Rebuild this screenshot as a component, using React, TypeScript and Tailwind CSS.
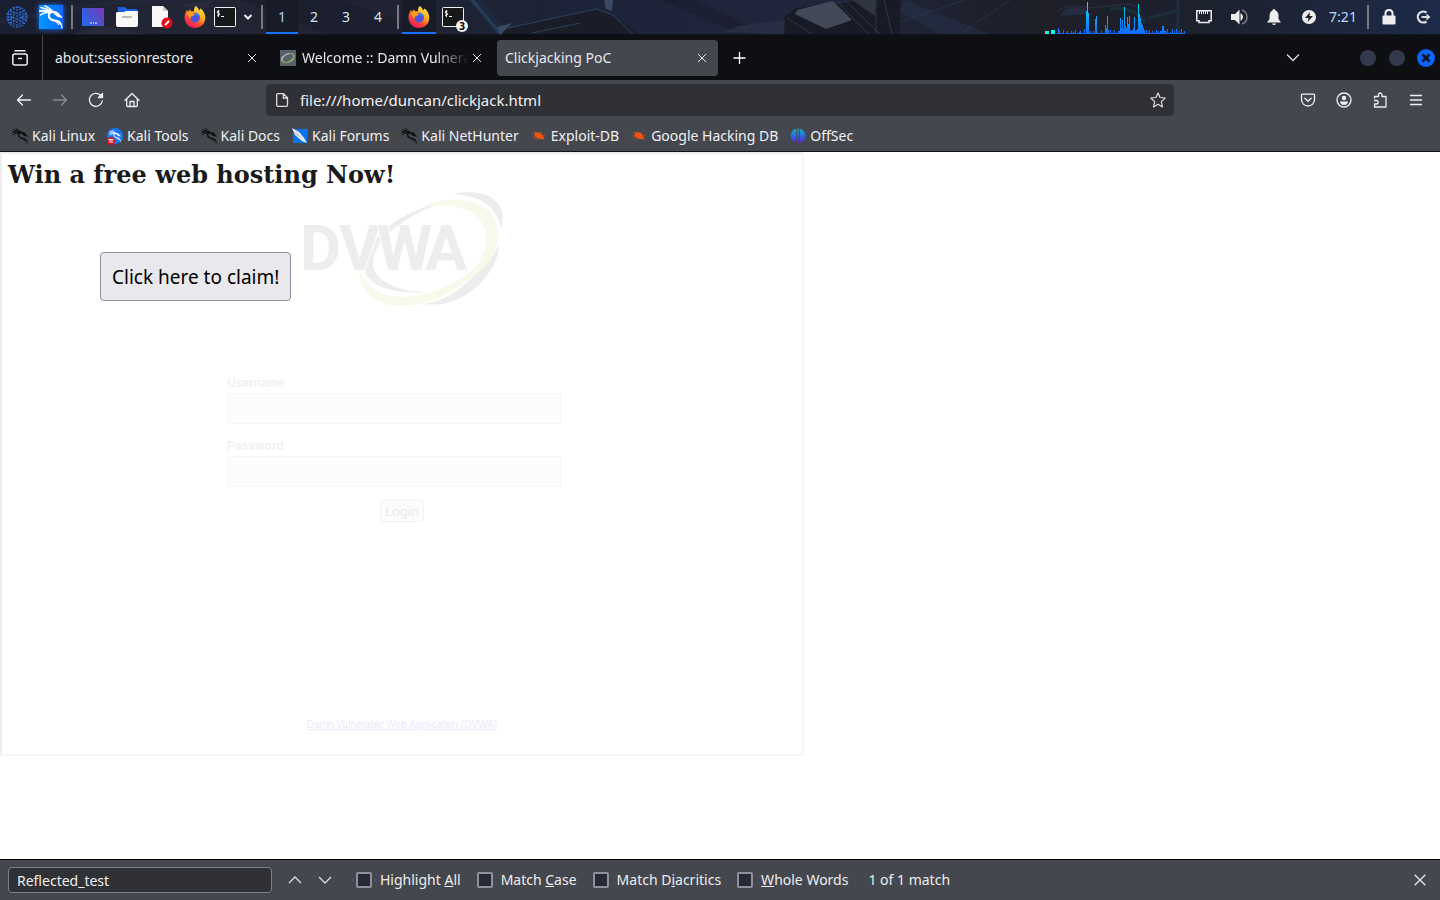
import { useState, type ReactNode } from "react";

const SPECTRUM = [
  1, 6, 4, 1, 1, 1, 4, 0, 1, 1, 3, 1, 1, 1, 3, 1, 2, 1, 4, 0, 1, 1, 2, 3, 1, 1, 1, 5, 1, 23, 32, 21, 2, 3, 1, 1, 3, 1,
  15, 18, 2, 1, 1, 1, 3, 1, 1, 1, 9, 6, 18, 4, 1, 4, 1, 1, 1, 4, 1, 1, 1, 3, 3, 16, 6, 14, 5, 27, 8, 6, 17, 10, 18, 4,
  3, 4, 6, 17, 3, 4, 5, 30, 20, 16, 11, 9, 6, 4, 1, 4, 1, 1, 4, 1, 1, 3, 1, 1, 1, 4, 1, 3, 1, 3, 3, 8, 8, 4, 3, 1, 5, 1,
  1, 2, 1, 5, 1, 3, 1, 5, 1, 1, 3, 1, 5, 1, 1, 3, 3,
];

function Wallpaper() {
  return (
    <svg className="absolute inset-0 size-full" viewBox="0 0 1440 35" preserveAspectRatio="none" aria-hidden="true">
      <defs>
        <linearGradient id="wall">
          <stop offset="0" stopColor="#191f30" />
          <stop offset=".12" stopColor="#222534" />
          <stop offset=".28" stopColor="#202432" />
          <stop offset=".4" stopColor="#1c2238" />
          <stop offset=".56" stopColor="#20273c" />
          <stop offset=".72" stopColor="#1d1e28" />
          <stop offset=".86" stopColor="#1d2230" />
          <stop offset="1" stopColor="#1c2a49" />
        </linearGradient>
      </defs>
      <path fill="url(#wall)" d="M0 0H1440V35H0Z" />
      <path fill="#253046" d="M0 25L95 6L190 0H120L0 18Z" opacity=".4" />
      <path fill="#2b303f" d="M70 35L100 25L150 35ZM180 5L212 0L205 10Z" opacity=".6" />
      <path fill="#151a25" d="M240 0H340L440 35H330Z" opacity=".4" />
      <path fill="#1b2a42" d="M468 0H480L510 35H498Z" />
      <path fill="#31516f" d="M470 0H474L503 35H500Z" opacity=".5" />
      <path fill="#1a1d27" d="M505 30L595 9L612 14L640 35H502Z" />
      <path stroke="#2e5273" fill="none" opacity=".7" d="M532 33L580 23M508 28L596 9L613 15L633 34" />
      <path fill="#3a4863" d="M604 0H613L612 11L606 9ZM497 27L512 23L500 35Z" />
      <path fill="#191d2d" d="M660 0H695L755 28L740 34Z" opacity=".7" />
      <path fill="#272d42" d="M725 32Q738 22 800 20V35Z" />
      <path fill="#181b25" d="M785 16L796 8L868 0H900V35H784Z" />
      <path fill="#424a59" d="M797 10L833 1L852 20L826 29L795 14Z" />
      <path stroke="#404a62" fill="none" opacity=".6" d="M837 1L868 34M845 0L880 34M787 18L812 34M876 0V34M884 0L892 34" />
      <path fill="#303542" d="M852 0H876L875 16Z" />
      <path fill="#273855" d="M905 0L990 34H940L900 12Z" opacity=".4" />
      <path stroke="#32445d" fill="none" opacity=".5" d="M900 22L965 0M960 34L1010 0M1057 12Q1065 2 1090 8L1130 4Q1147 10 1144 24" />
      <path stroke="#1d3a49" strokeWidth="3" fill="none" opacity=".6" d="M1148 18L1176 11M1178 0V34M1110 9Q1135 6 1144 22" />
      <path fill="#242b43" d="M1060 16Q1065 4 1085 8L1090 14Z" />
      <path fill="#0b0d12" d="M0 34H1440V35H0Z" opacity=".6" />
    </svg>
  );
}

function Dragon({ className }: { className: string }) {
  return (
    <svg className={className} viewBox="0 0 24 24" fill="none" stroke="currentColor" strokeLinecap="round" aria-hidden="true">
      <path strokeWidth="1.400" d="M2 2.500Q8 3.500 12.500 6.500M1.500 10Q6 6.500 12 7.500M6 .8Q10 2.500 13 5.500" />
      <path strokeWidth="2" d="M1 6Q9 5.200 14.500 7Q18 7.300 19.500 9.500" />
      <path fill="currentColor" strokeWidth=".8" d="M14 6.500Q19 6.500 20.500 9.500L23 12.500L18.500 11.500L15.500 9Z" />
      <path strokeWidth="2" d="M12.500 7Q9 8.500 10 12Q11.500 15.300 16 15.500Q20.500 16 21.500 19" />
      <path strokeWidth="1.200" d="M21 17.500Q23 20 23 23M15 15.500Q19 18 19.500 19.500" />
    </svg>
  );
}

function Separator() {
  return (
    <span className="flex w-2 shrink-0 justify-center">
      <span className="h-6 w-0.5 bg-[#777980]" />
    </span>
  );
}

function LogoFirefox() {
  return (
    <svg className="size-6" viewBox="0 0 24 24" aria-hidden="true">
      <defs>
        <linearGradient id="fxBody" x1=".8" y1=".05" x2=".25" y2=".95">
          <stop offset="0" stopColor="#fff04a" />
          <stop offset=".4" stopColor="#ffa620" />
          <stop offset=".68" stopColor="#ff4b32" />
          <stop offset="1" stopColor="#ec1561" />
        </linearGradient>
      </defs>
      <path fill="url(#fxBody)" d="M12.8 1C14.5 2.3 15.6 3.8 16.1 5.5L17.5 3.4C19.8 5.2 22.5 8.3 22.3 13.3C22 19.2 17.6 23 12.1 23C6.2 23 1.5 18.7 1.5 12.6C1.5 9.6 2.4 7 4.2 4.7L5 7L7 4.2L7.8 6.3C9.3 6 10 6.2 11 6.5C10.8 4.1 11.4 2.4 12.8 1Z" />
      <circle cx="12" cy="12.6" r="4.9" fill="#4d55dd" />
      <path fill="#ff9a25" d="M4.8 7.6C7.5 6.8 10.3 7.4 12 9.2C11.5 10.5 9.7 10.8 8.2 11.2C7.6 12 7.9 12.8 8.5 13.5C5.7 13.4 4.2 10.7 4.8 7.6Z" />
      <path fill="#2b83ef" d="M12 8.1C14.3 7.8 16.4 9.3 16.9 11.3L13 11Z" />
    </svg>
  );
}

function LogoTerminal() {
  return (
    <svg className="h-5 w-6" viewBox="0 0 24 20" aria-hidden="true">
      <rect x="1.5" y=".5" width="21" height="19" rx="1" fill="#171819" stroke="#f0f0f0" />
      <path d="M6.5 4.3Q4.2 3.6 4.2 5.2Q4.3 6.2 5.5 6.2T6.7 7.5Q6.3 8.9 4.2 8.2M5.4 3V10" stroke="#fff" fill="none" />
      <path d="M8 9.5H11" stroke="#fff" />
    </svg>
  );
}

function MenuOrb() {
  return (
    <svg className="size-6" viewBox="0 0 24 24" fill="none" stroke="#2c6cd8" strokeWidth="1.200" aria-hidden="true">
      <circle cx="12" cy="12" r="10" strokeDasharray="2 1" />
      <path strokeDasharray="2 1" d="M12 1V23M9 3V21M15 3V21M6 5V19M18 5V19M3.500 8V16M20.500 8V16M3 9L9 13M21 9L15 13M3 15L9 12M21 15L15 12M5 6L11 9M19 6L13 9M5 18L11 15M19 18L13 15" />
    </svg>
  );
}

function PanelButton({ label, children, active }: { label: string; children: ReactNode; active?: boolean }) {
  return (
    <button
      aria-label={label}
      className={
        active
          ? "flex h-full w-[34px] shrink-0 items-center justify-center border-y-2 border-t-transparent border-b-[#1673ff] bg-[#181c28]"
          : "flex h-full w-[34px] shrink-0 items-center justify-center"
      }
    >
      {children}
    </button>
  );
}

function DesktopPanel() {
  const [workspace, setWorkspace] = useState(1);
  return (
    <header className="relative h-[35px] bg-[#1d2232] text-[#eee]">
      <Wallpaper />
      <div className="relative flex h-[34px] items-center">
        <PanelButton label="Applications"><MenuOrb /></PanelButton>
        <PanelButton label="Kali menu">
          <span className="flex size-6 items-center justify-center bg-linear-to-r from-[#0899ff] to-[#1266ff] shadow-[0_0_5px_#1473ff]">
            <Dragon className="size-6 text-white" />
          </span>
        </PanelButton>
        <Separator />
        <PanelButton label="Show desktop">
          <svg className="size-6" viewBox="0 0 24 24" aria-hidden="true">
            <defs><linearGradient id="desk" x2="1" y1=".8" y2=".2"><stop stopColor="#2468ed" /><stop offset="1" stopColor="#743cbb" /></linearGradient></defs>
            <path fill="url(#desk)" d="M1 3H23V21H1Z" />
            <path stroke="#fff" d="M9 18H11M12 18H13M14 18H16" />
          </svg>
        </PanelButton>
        <PanelButton label="Files">
          <svg className="size-6" viewBox="0 0 24 24" aria-hidden="true">
            <path fill="#1e5fe0" d="M3 2H10L12 4H22V10H3Z" />
            <path fill="#f7f7f7" d="M2 7H9L11 6H23V20Q23 22 21 22H3Q1 22 1 20V8Z" />
            <rect x="7" y="11" width="10" height="2" rx="1" fill="#b8b8b8" />
          </svg>
        </PanelButton>
        <PanelButton label="Text editor">
          <svg className="size-6" viewBox="0 0 24 24" aria-hidden="true">
            <path fill="#f7f7f7" d="M3 1H14L19 6V22H3Z" />
            <path fill="#c8c8c8" d="M14 1V6H19Z" />
            <circle cx="18" cy="18" r="5.500" fill="#e00b14" />
            <path stroke="#fff" strokeWidth="2" d="M16 20L20 16" />
          </svg>
        </PanelButton>
        <PanelButton label="Firefox"><LogoFirefox /></PanelButton>
        <button aria-label="Terminal" className="flex w-[26px] shrink-0 justify-center"><LogoTerminal /></button>
        <button aria-label="More terminals" className="flex w-5 shrink-0 justify-center">
          <svg className="size-3" viewBox="0 0 12 12" fill="none" stroke="#eee" strokeWidth="2" aria-hidden="true"><path d="M2.500 4L6 7.500L9.500 4" /></svg>
        </button>
        <Separator />
        {[1, 2, 3, 4].map((n) => (
          <button
            key={n}
            onClick={() => setWorkspace(n)}
            className={
              n === workspace
                ? "h-full w-8 shrink-0 border-y-2 border-t-transparent border-b-[#1673ff] bg-[#181c28] text-[#a9d2ff]"
                : "h-full w-8 shrink-0 border-y-2 border-transparent text-[#d4e4f4]"
            }
          >
            {n}
          </button>
        ))}
        <Separator />
        <PanelButton label="Firefox window" active><LogoFirefox /></PanelButton>
        <button aria-label="Terminal windows" className="relative flex h-full w-[34px] shrink-0 items-center justify-center">
          <LogoTerminal />
          <span className="absolute right-0.5 bottom-0.5 flex size-3 items-center justify-center rounded-full bg-[#f3f3f3] text-[10px] font-bold text-black">3</span>
        </button>
        <svg className="mr-px ml-auto h-[34px] w-[140px] shrink-0" viewBox="0 0 140 34" aria-hidden="true">
          <defs>
            <linearGradient id="eq" gradientUnits="userSpaceOnUse" x1="0" x2="0" y1="0" y2="34"><stop stopColor="#05f5e8" /><stop offset=".5" stopColor="#13a6f4" /><stop offset="1" stopColor="#1068ff" /></linearGradient>
          </defs>
          <path fill="#09f8df" d="M0 31H4V34H0ZM6 30H10V34H6Z" />
          <g fill="url(#eq)">
            {SPECTRUM.map((h, i) => <rect key={i} x={12 + i} y={34 - h} width="1" height={h} />)}
          </g>
        </svg>
        <div className="flex shrink-0 items-center">
          <button aria-label="Network" className="flex w-[35px] justify-center">
            <svg className="size-[18px]" viewBox="0 0 18 18" aria-hidden="true"><path fill="none" stroke="#eee" strokeWidth="1.500" d="M1.800 2.800H16.200V12.800H14V14.500H4V12.800H1.800Z" /><path stroke="#eee" d="M4.500 3V6M6.500 3V6M8.500 3V6M10.500 3V6M12.500 3V6" /></svg>
          </button>
          <button aria-label="Volume" className="flex w-[35px] justify-center">
            <svg className="size-[18px]" viewBox="0 0 18 18" aria-hidden="true"><path fill="#eee" d="M1 6H5L9.500 1.500V16.500L5 12H1Z" /><path fill="#eee" d="M10.500 5Q13 6.500 13 9T10.500 13Z" /><path fill="none" stroke="#777b83" strokeWidth="1.500" d="M12 2Q17 4 17 9T12 16" /></svg>
          </button>
          <button aria-label="Notifications" className="flex w-[35px] justify-center">
            <svg className="size-[18px]" viewBox="0 0 18 18" fill="#eee" aria-hidden="true"><path d="M9 1Q10.500 1 10.500 2.600Q13.500 4 13.500 7.500V11L16 14.500H2L4.500 11V7.500Q4.500 4 7.500 2.600Q7.500 1 9 1ZM7 15.500H11Q10.500 17 9 17T7 15.500Z" /></svg>
          </button>
          <button aria-label="Power" className="flex w-[35px] justify-center">
            <svg className="size-[18px]" viewBox="0 0 18 18" aria-hidden="true"><circle cx="9" cy="9" r="7" fill="#eee" /><path fill="#1c202c" d="M10 4L5 10H8.500L7.500 14L13 8H9.500Z" /></svg>
          </button>
          <time className="w-[38px] pr-1 text-center text-[#b9dcff]">7:21</time>
          <Separator />
          <button aria-label="Lock screen" className="flex w-[34px] justify-center">
            <svg className="size-[18px]" viewBox="0 0 18 18" aria-hidden="true"><path fill="none" stroke="#eee" strokeWidth="2" d="M5.500 8V5.500Q5.500 2 9 2T12.500 5.500V8" /><rect x="2.500" y="7.500" width="13" height="9" rx="1" fill="#eee" /></svg>
          </button>
          <button aria-label="Log out" className="flex w-[34px] justify-center">
            <svg className="size-[18px]" viewBox="0 0 18 18" fill="none" stroke="#ddd" strokeWidth="2.200" aria-hidden="true"><path d="M12.500 4.500A5.500 5.500 0 1 0 12.500 13.500M7.500 9H15" /><path fill="#ddd" stroke="none" d="M12.500 5.500L16.500 9L12.500 12.500Z" /></svg>
          </button>
        </div>
      </div>
    </header>
  );
}

function Cross({ className }: { className: string }) {
  return (
    <svg className={className} viewBox="0 0 12 12" fill="none" stroke="#e6e6e6" strokeWidth="1" aria-hidden="true">
      <path d="M2 2L10 10M10 2L2 10" />
    </svg>
  );
}

function Tab({ title, active, fade, icon }: { title: string; active?: boolean; fade?: boolean; icon?: ReactNode }) {
  return (
    <div
      className={
        active
          ? "flex h-9 w-[221px] items-center gap-[6px] rounded-sm bg-[#44474e] px-2"
          : "flex h-9 w-[221px] items-center gap-[6px] rounded-sm px-2"
      }
    >
      {icon}
      <button
        role="tab"
        aria-selected={!!active}
        className={
          fade
            ? "min-w-0 flex-1 overflow-hidden text-left whitespace-nowrap mask-r-from-80% mask-r-to-100%"
            : "min-w-0 flex-1 overflow-hidden text-left whitespace-nowrap"
        }
      >
        {title}
      </button>
      <button aria-label={"Close " + title} className={fade ? "-ml-1 shrink-0 pr-0.5" : "shrink-0 pr-0.5"}>
        <Cross className="size-3" />
      </button>
    </div>
  );
}

function TabStrip() {
  return (
    <div className="flex h-[45px] items-center bg-[#0e0f13]">
      <button aria-label="Firefox View" className="flex h-full w-[43px] shrink-0 items-center justify-center border-r border-[#44464c] pr-0.5">
        <svg className="size-[18px]" viewBox="0 0 18 18" fill="none" stroke="#eee" strokeWidth="1.500" strokeLinecap="round" aria-hidden="true">
          <path d="M4 1.800H14M7.500 9.500H10.500" />
          <rect x="1.800" y="5" width="14.400" height="11" rx="2" />
        </svg>
      </button>
      <div role="tablist" className="ml-1 flex gap-1">
        <Tab title="about:sessionrestore" />
        <Tab
          title="Welcome :: Damn Vulnera"
          fade
          icon={
            <svg className="size-4 shrink-0" viewBox="0 0 16 16" aria-hidden="true">
              <path fill="#58616b" d="M0 0H16V16H0Z" />
              <ellipse cx="8" cy="8" rx="6.500" ry="4" transform="rotate(-25 8 8)" fill="none" stroke="#d8dddd" strokeWidth="1" />
              <path fill="none" stroke="#7fa03c" strokeWidth="1.200" d="M9 3.500Q14 3 14 6.500Q12 10.500 7 12.500Q3 13 2 11" />
            </svg>
          }
        />
        <Tab title="Clickjacking PoC" active />
      </div>
      <button aria-label="New tab" className="ml-[14px]">
        <svg className="size-4" viewBox="0 0 16 16" stroke="#fff" strokeWidth="1.300" aria-hidden="true"><path d="M7.500 2V14M1.500 8H13.500" /></svg>
      </button>
      <div className="ml-auto flex items-center">
        <button aria-label="List all tabs" className="mr-[59px]">
          <svg className="size-4" viewBox="0 0 16 16" fill="none" stroke="#ddd" strokeWidth="1.300" aria-hidden="true"><path d="M2 4.500L8 10.500L14 4.500" /></svg>
        </button>
        <div className="flex items-center gap-3 pr-[5px]">
          <button aria-label="Minimize" className="size-4 rounded-full bg-[#343a4d]" />
          <button aria-label="Maximize" className="ml-px size-4 rounded-full bg-[#343a4d]" />
          <button aria-label="Close window" className="flex size-[18px] items-center justify-center rounded-full bg-[#0c64fb]">
            <svg className="size-3" viewBox="0 0 12 12" stroke="#0d1424" strokeWidth="2.500" aria-hidden="true"><path d="M2.500 2.500L9.500 9.500M9.500 2.500L2.500 9.500" /></svg>
          </button>
        </div>
      </div>
    </div>
  );
}

function NavButton({ label, children, muted }: { label: string; children: ReactNode; muted?: boolean }) {
  return (
    <button aria-label={label} className={muted ? "flex w-9 justify-center text-[#8a8c91]" : "flex w-9 justify-center text-[#f0f0f2]"}>
      <svg className="size-4" viewBox="0 0 16 16" fill="none" stroke="currentColor" strokeWidth="1.300" strokeLinecap="round" strokeLinejoin="round" aria-hidden="true">
        {children}
      </svg>
    </button>
  );
}

function NavBar() {
  return (
    <div className="flex h-10 items-center px-[6px]">
      <NavButton label="Back"><path d="M14.500 8H1.500M6.500 3L1.500 8L6.500 13" /></NavButton>
      <NavButton label="Forward" muted><path d="M1.500 8H14.500M9.500 3L14.500 8L9.500 13" /></NavButton>
      <NavButton label="Reload"><path d="M14.300 9A6.500 6.500 0 1 1 12.500 3.200L14.500 5.200" /><path fill="currentColor" d="M14.500 1.500V5.500H10.500Z" /></NavButton>
      <NavButton label="Home"><path d="M1 8.200L8 1.500L15 8.200M2.700 7V13.500Q2.700 14.500 3.700 14.500H12.300Q13.300 14.500 13.300 13.500V7M6 14V9.500H10V14" /></NavButton>
      <div className="mx-[116px] flex h-8 min-w-0 flex-1 items-center rounded-sm bg-[#303136] px-2 text-[#f2f2f3]">
        <svg className="size-4 shrink-0" viewBox="0 0 16 16" fill="none" stroke="#ddd" strokeWidth="1.300" aria-hidden="true">
          <path d="M4 1.700H9.500L13.500 5.700V13Q13.500 14.300 12.200 14.300H4Q2.700 14.300 2.700 13V3Q2.700 1.700 4 1.700ZM9.300 2V6H13.300" />
        </svg>
        <input aria-label="Address" defaultValue="file:///home/duncan/clickjack.html" className="ml-[10px] min-w-0 flex-1 bg-transparent text-[15px] outline-none" />
        <button aria-label="Bookmark this page">
          <svg className="size-4" viewBox="0 0 16 16" fill="none" stroke="#ddd" strokeWidth="1.200" strokeLinejoin="round" aria-hidden="true">
            <path d="M8 1L10 5.500L15.200 6L11.300 9.600L12.500 15L8 12.200L3.500 15L4.700 9.600L.8 6L6 5.500Z" />
          </svg>
        </button>
      </div>
      <NavButton label="Pocket"><path d="M2.500 2.200H13.500Q14.500 2.200 14.500 3.200V7.500A6.500 6.500 0 0 1 1.500 7.500V3.200Q1.500 2.200 2.500 2.200ZM4.800 6.200L8 9.300L11.200 6.200" /></NavButton>
      <NavButton label="Account"><circle cx="8" cy="8" r="7" /><circle cx="8" cy="6" r="2.300" fill="currentColor" stroke="none" /><path fill="currentColor" stroke="none" d="M4 9.500H12Q11.500 13 8 13T4 9.500Z" /></NavButton>
      <NavButton label="Extensions"><path d="M2.500 6V4.500H6.500V3Q6.500 1 8.200 1T10 3V4.500H14V15H2.500V12H4.500Q6.200 12 6.200 10.300T4.500 8.500H2.500" /></NavButton>
      <NavButton label="Menu"><path d="M2.500 3.500H13.500M2.500 8H13.500M2.500 12.500H13.500" /></NavButton>
    </div>
  );
}

const kaliIcon = <Dragon className="size-4 text-[#0c0c0d]" />;
const bugIcon = (
  <svg className="size-4" viewBox="0 0 16 16" aria-hidden="true">
    <path fill="#ff5208" d="M4 5Q7 3.500 10 5.500Q13 8 13 11Q8.500 11.500 5.500 9.500Q3 7.500 4 5Z" />
    <path stroke="#d9541c" strokeWidth=".6" fill="none" d="M1.500 5H5M3.500 3L5 5M.5 8H5M2 11L5.500 9M4.500 12.500L7 10M10.500 3.500L10 6M14.500 7L11 8M12 11L13.500 13" />
  </svg>
);

const BOOKMARKS: { name: string; icon: ReactNode }[] = [
  { name: "Kali Linux", icon: kaliIcon },
  {
    name: "Kali Tools",
    icon: (
      <span className="relative flex size-4 items-center justify-center rounded-full bg-[#1677f5]">
        <Dragon className="size-3 text-white" />
        <svg className="absolute -bottom-px left-0 size-2" viewBox="0 0 8 8" aria-hidden="true"><circle cx="4" cy="4" r="4" fill="#df101c" /><path stroke="#fff" d="M1.500 2.500H6.500M3 3V6M5 3V6" /></svg>
      </span>
    ),
  },
  { name: "Kali Docs", icon: kaliIcon },
  {
    name: "Kali Forums",
    icon: (
      <svg className="size-4" viewBox="0 0 16 16" aria-hidden="true">
        <path fill="#0875ef" d="M1 1H16L15 15H1Z" />
        <path fill="#f3f5f7" d="M0 0L7 4L12 10L15 15L10 13L3 7Z" />
        <path stroke="#777" strokeWidth=".5" d="M4 4L11 12M1 3L6 8" />
      </svg>
    ),
  },
  { name: "Kali NetHunter", icon: kaliIcon },
  { name: "Exploit-DB", icon: bugIcon },
  { name: "Google Hacking DB", icon: bugIcon },
  {
    name: "OffSec",
    icon: (
      <svg className="size-4" viewBox="0 0 16 16" aria-hidden="true">
        <defs><linearGradient id="off" gradientUnits="userSpaceOnUse" x1="0" y1="0" x2="0" y2="16"><stop stopColor="#10b4bd" /><stop offset=".5" stopColor="#2a6be0" /><stop offset="1" stopColor="#6818cc" /></linearGradient></defs>
        <path fill="url(#off)" d="M6.300 .8V13.500Q5 15.500 3.500 13.500Q.5 11.500 .5 7.500Q1 2.500 6.300 .8ZM9.700 .8Q15 2.500 15.500 7.500Q15.500 11.500 12.500 13.500Q11 15.500 9.700 13.500ZM7.300 .5H8.700V15.500H7.300Z" />
      </svg>
    ),
  },
];

function BookmarksBar() {
  return (
    <nav aria-label="Bookmarks" className="flex h-[31px] items-center gap-3 px-3 text-[#f0f0f2]">
      {BOOKMARKS.map((b) => (
        <a key={b.name} href="#" className="flex shrink-0 items-center gap-1 whitespace-nowrap">
          {b.icon}
          {b.name}
        </a>
      ))}
    </nav>
  );
}

function DvwaLogo() {
  return (
    <svg className="mx-auto h-[140px] w-[224px]" viewBox="0 0 224 140" role="img" aria-label="DVWA">
      <g fill="#ededed">
        <path d="M163 14C195 6 220 22 211 48C207 28 193 16 163 14Z" />
        <path d="M209 64C209 92 175 130 134 124C160 120 175 105 190 90C200 80 206 72 209 64Z" />
        <path d="M146 25C110 30 74 62 74 88C76 106 105 115 138 112C110 112 84 102 83 84C82 62 112 38 146 25Z" />
      </g>
      <g fill="#f6faea">
        <path d="M128 28C165 12 208 18 208 56C208 78 190 95 168 104C185 92 197 75 196 56C194 30 165 20 128 28Z" />
        <path d="M70 92C80 112 100 120 125 116C150 112 170 100 195 82C170 110 145 125 110 126C85 126 68 108 70 92Z" />
      </g>
      <text
        x="10 49 87 135"
        y="90"
        className="font-['Roboto',sans-serif] text-[63px] font-bold"
        fill="#ededed"
        stroke="#fff"
        strokeWidth="2"
        paintOrder="stroke"
      >
        DVWA
      </text>
    </svg>
  );
}

function LoginFrame() {
  return (
    <section
      aria-label="Login"
      className="absolute top-0 left-0 h-[604px] w-[804px] border-2 border-t-[#ededed] border-r-[#f6f6f6] border-b-[#f6f6f6] border-l-[#ededed] pt-[26px] font-['Liberation_Sans',sans-serif]"
    >
      <DvwaLogo />
      <form className="mx-auto mt-[53px] flex w-[350px] flex-col" onSubmit={(e) => e.preventDefault()}>
        <label htmlFor="user" className="text-[12px] leading-5 font-bold text-[#f1f1f1]">Username</label>
        <input id="user" className="h-[31px] w-[334px] border border-[#f6f6f6] bg-[#fcfcfc] outline-none" />
        <label htmlFor="pass" className="mt-3 text-[12px] leading-5 font-bold text-[#f1f1f1]">Password</label>
        <input id="pass" type="password" className="h-[31px] w-[334px] border border-[#f6f6f6] bg-[#fcfcfc] outline-none" />
        <button className="mt-3 h-[23px] self-center rounded-sm border border-[#f3f3f3] bg-[#fcfcfc] px-1 font-['Noto_Sans',sans-serif] text-[13px] leading-5 text-[#e9e9e9]">Login</button>
      </form>
      <p className="mt-[197px] text-center text-[10px] leading-3">
        <a href="#" className="text-[#ebe9fb] underline">Damn Vulnerable Web Application (DVWA)</a>
      </p>
    </section>
  );
}

function FindOption({ id, before, letter, after }: { id: string; before: string; letter: string; after: string }) {
  return (
    <div className="flex shrink-0 items-center gap-2">
      <input id={id} type="checkbox" className="size-4 appearance-none rounded-xs border-2 border-[#8f8f9d] bg-[#272936] checked:bg-[#0c64fb]" />
      <label htmlFor={id} className="whitespace-pre">{before}<u>{letter}</u>{after}</label>
    </div>
  );
}

function FindBar() {
  return (
    <footer className="flex h-[41px] items-center border-t border-black bg-[#44474e] px-2 text-[#eee]">
      <input aria-label="Find in page" defaultValue="Reflected_test" className="h-[26px] w-[264px] rounded-sm border border-[#808187] bg-[#303136] px-2 outline-none" />
      <div className="ml-[15px] flex gap-[14px]">
        <button aria-label="Previous match"><svg className="size-4" viewBox="0 0 16 16" fill="none" stroke="#ddd" strokeWidth="1.300" aria-hidden="true"><path d="M2 11L8 5L14 11" /></svg></button>
        <button aria-label="Next match"><svg className="size-4" viewBox="0 0 16 16" fill="none" stroke="#ddd" strokeWidth="1.300" aria-hidden="true"><path d="M2 5L8 11L14 5" /></svg></button>
      </div>
      <div className="ml-[23px] flex gap-4">
        <FindOption id="all" before="Highlight " letter="A" after="ll" />
        <FindOption id="case" before="Match " letter="C" after="ase" />
        <FindOption id="dia" before="Match D" letter="i" after="acritics" />
        <FindOption id="whole" before="" letter="W" after="hole Words" />
        <span className="ml-1 whitespace-nowrap">1 of 1 match</span>
      </div>
      <button aria-label="Close find bar" className="ml-auto pr-1"><Cross className="size-4" /></button>
    </footer>
  );
}

export default function App() {
  return (
    <div className="flex min-h-screen flex-col bg-white font-['Noto_Sans',sans-serif] text-[14px] leading-5">
      <DesktopPanel />
      <div className="border-b border-[#111216] bg-[#44474e] text-[#e8e8ea]">
        <TabStrip />
        <NavBar />
        <BookmarksBar />
      </div>
      <main className="relative min-h-[604px] flex-1">
        <h1 className="px-2 pt-2 font-['DejaVu_Serif',serif] text-[24px] leading-[30px] font-bold text-[#1a1a1a]">Win a free web hosting Now!</h1>
        <button className="mt-[62px] ml-[100px] h-[49px] rounded-sm border border-[#8f8f9d] bg-[#e9e9ed] px-[11px] text-[19px] leading-7 text-black">Click here to claim!</button>
        <LoginFrame />
      </main>
      <FindBar />
    </div>
  );
}
